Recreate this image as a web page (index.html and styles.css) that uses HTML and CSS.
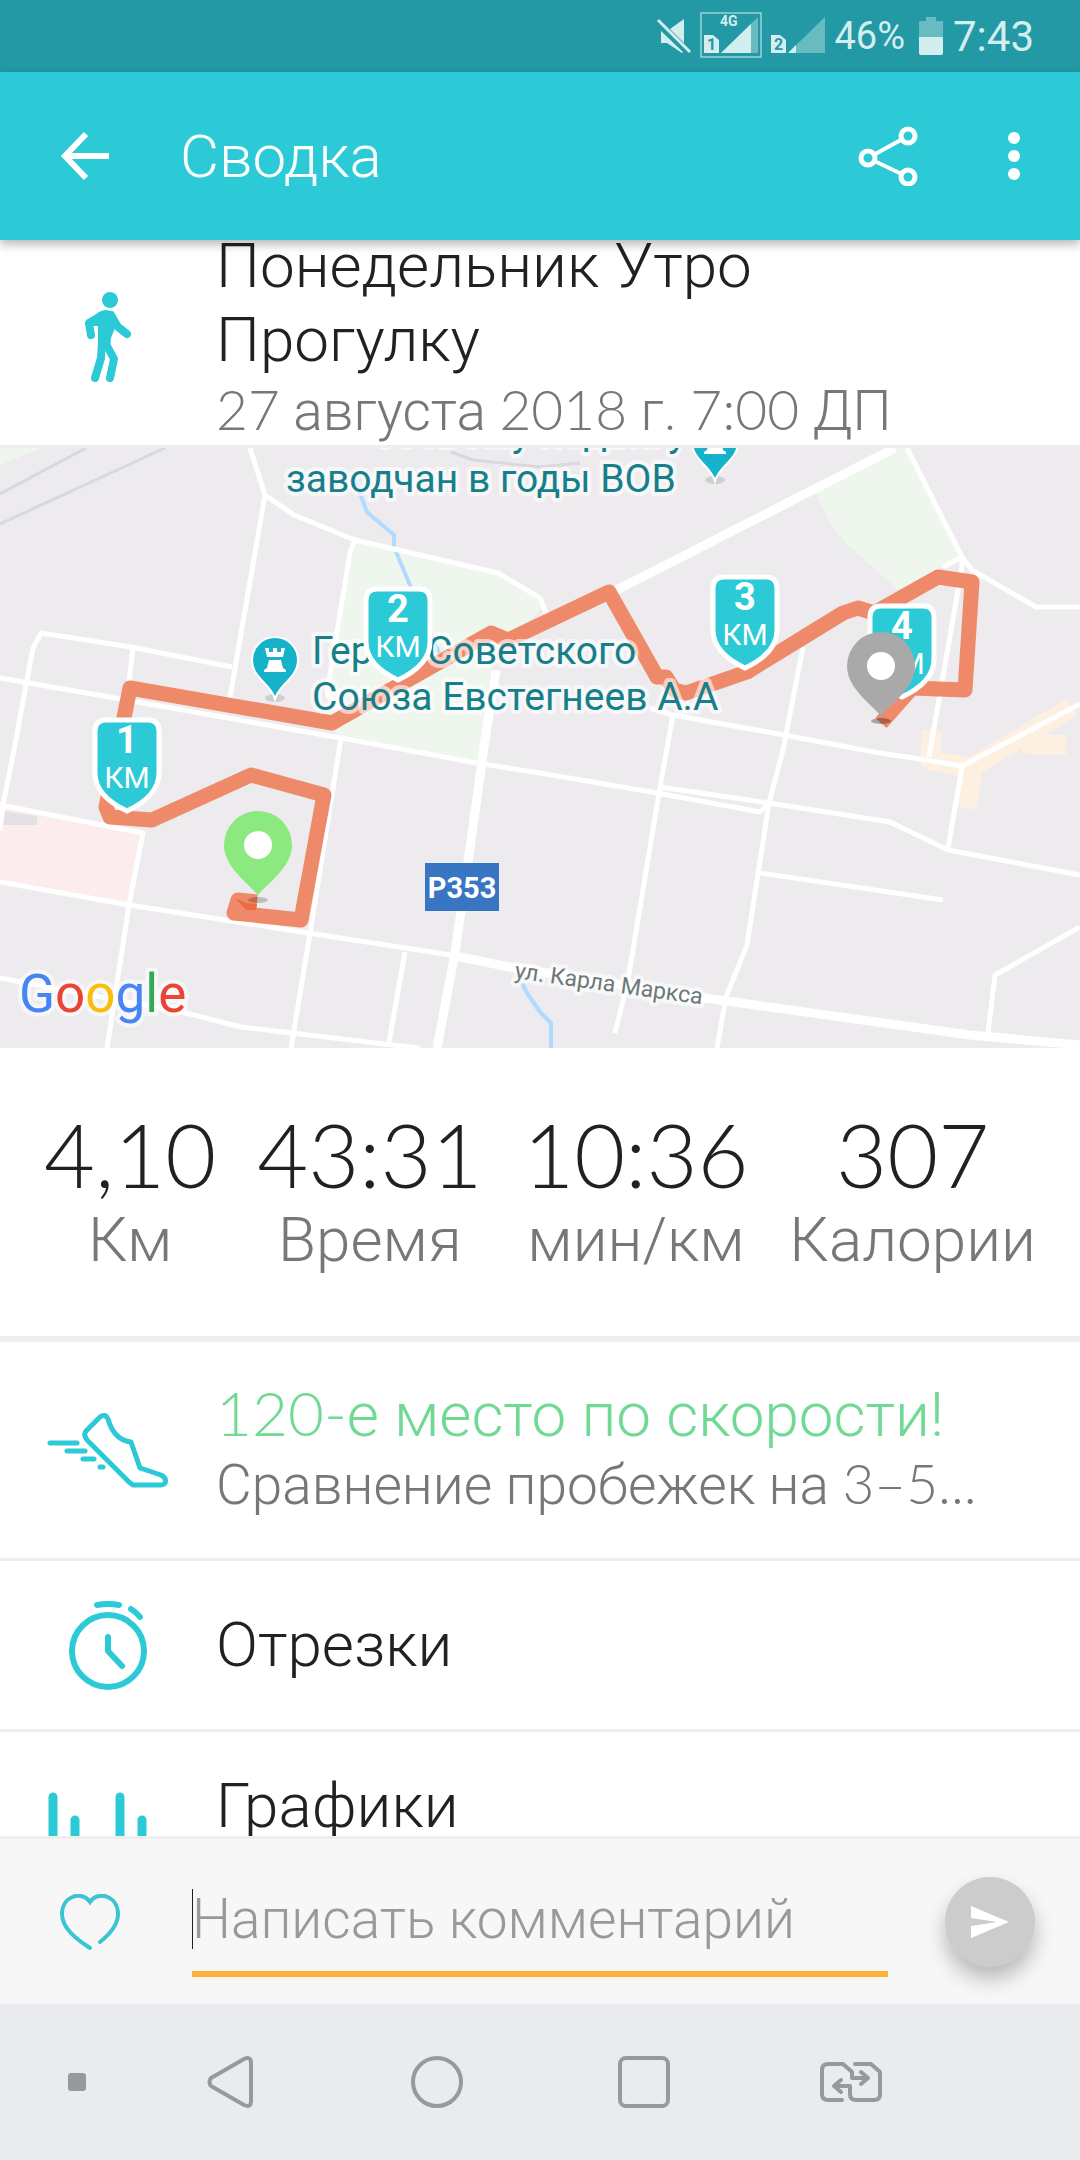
FILE: index.html
```html
<!DOCTYPE html>
<html lang="ru">
  <head>
    <meta charset="UTF-8" />
    <meta name="viewport" content="width=device-width,initial-scale=1.0" />
    <title>Сводка</title>
    <link rel="stylesheet" href="styles.css">
  </head>
  <body>
    <div class="status-bar">
      <svg width="36" height="38" viewBox="0 0 36 38" fill="currentColor">
        <path d="M14 12 L28 2 V26 Z M5 14 L5 26 H11 L26 36 L27 35 Z" />
        <path d="M2 3 L34 35" stroke="currentColor" stroke-width="3" />
      </svg>
      <svg class="sim" width="62" height="46" viewBox="0 0 62 46" fill="currentColor">
        <rect x="1" y="1" width="60" height="44" fill="none" stroke="currentColor" />
        <path d="M21 41 L58 5 V41 Z" opacity=".4" />
        <path d="M21 41 L51 12 V41 Z" />
        <path d="M4 23 H13 L19 28 V41 H4 Z" />
        <text x="20" y="14" class="net">4G</text>
        <text x="7" y="38" class="sim-no">1</text>
      </svg>
      <svg class="sim" width="56" height="46" viewBox="0 0 56 46" fill="currentColor">
        <path d="M18 41 L55 5 V41 Z" opacity=".4" />
        <path d="M18 41 L26 33 V41 Z" />
        <path d="M1 23 H10 L16 28 V41 H1 Z" />
        <text x="4" y="38" class="sim-no">2</text>
      </svg>
      <span class="battery-level">46%</span>
      <svg width="24" height="38" viewBox="0 0 24 38" fill="currentColor">
        <path d="M7 0 H17 V4 H24 V20 H0 V4 H7 Z" opacity=".4" />
        <path d="M0 20 H24 V36 Q24 38 22 38 H2 Q0 38 0 36 Z" />
      </svg>
      <span class="clock">7:43</span>
    </div>

    <header class="app-bar">
      <button class="icon-btn" aria-label="Назад">
        <svg width="50" height="50" viewBox="0 0 50 50" fill="none" stroke="currentColor" stroke-width="6">
          <path d="M26 3 L5 25 L26 47 M5 25 H49" />
        </svg>
      </button>
      <h1>Сводка</h1>
      <button class="icon-btn" aria-label="Поделиться">
        <svg width="60" height="60" viewBox="0 0 60 60" fill="none" stroke="currentColor">
          <path d="M10 32 L50 10 M10 32 L50 51" stroke-width="4" />
          <g class="share-dots" stroke-width="5">
            <circle cx="10" cy="32" r="7" />
            <circle cx="50" cy="10" r="7" />
            <circle cx="50" cy="51" r="7" />
          </g>
        </svg>
      </button>
      <button class="icon-btn" aria-label="Меню">
        <svg width="12" height="48" viewBox="0 0 12 48" fill="currentColor">
          <circle cx="6" cy="6" r="6" />
          <circle cx="6" cy="24" r="6" />
          <circle cx="6" cy="42" r="6" />
        </svg>
      </button>
    </header>

    <main>
      <section class="row activity">
        <div class="row-icon">
          <svg width="46" height="90" viewBox="0 0 46 90" fill="none" stroke="currentColor" stroke-width="8" stroke-linecap="round" stroke-linejoin="round">
            <ellipse cx="25" cy="8" rx="8" ry="8" fill="currentColor" stroke="none" />
            <path d="M14 20 Q21 16 27 20 L32 31 L26 46 L25 56 H13 V34 L8 34 L3 28 Z" fill="currentColor" stroke="none" />
            <path d="M16 24 L4 31 L6 43" />
            <path d="M26 23 L33 35 L42 42" />
            <path d="M17 50 L16 66 L10 86" />
            <path d="M20 50 L29 67 L25 86" />
          </svg>
        </div>
        <div class="row-text">
          <h2>Понедельник Утро Прогулку</h2>
          <p><span class="num">27</span> августа <span class="num">2018</span> г. <span class="num">7:00</span> ДП</p>
        </div>
      </section>

      <svg class="map" viewBox="0 448 1080 600" preserveAspectRatio="xMidYMid slice" role="img" aria-label="Карта маршрута">
        <defs>
          <g id="shield">
            <path d="M-32 13 Q-32 2 -21 2 H21 Q32 2 32 13 V55 Q32 78 0 93 Q-32 78 -32 55 Z" fill="#2ccad7" stroke="#fff" stroke-width="5" />
          </g>
          <g id="pin">
            <path d="M0 50 C-10 38 -34 22 -34 0 A34 34 0 0 1 34 0 C34 22 10 38 0 50 Z" />
            <circle r="14" fill="#fff" />
          </g>
          <g id="poi">
            <ellipse cx="0" cy="38" rx="10" ry="4" fill="#000" opacity=".12" />
            <path d="M0 39 C-4 24 -23 18 -23 0 A23 23 0 0 1 23 0 C23 18 4 24 0 39 Z" fill="#15b2c9" stroke="#fff" stroke-width="2" />
            <path d="M-10 -12 H-6 V-8 H-2 V-12 H2 V-8 H6 V-12 H10 L8 -3 H-8 Z M-6 0 H6 L8 8 L11 10 V12 H-11 V10 L-8 8 Z" fill="#fff" />
          </g>
        </defs>

        <rect y="448" width="1080" height="600" fill="#edebee" />

        <g fill="#eef6ee">
          <path d="M0 448 H41 L0 465 Z" />
          <path d="M355 540 L498 573 L545 605 L492 657 L479 763 L336 737 L327 693 Z" />
          <path d="M895 448 L815 490 Q830 530 850 547 L898 590 L962 557 L907 448 Z" />
        </g>
        <path d="M0 807 L143 833 L129 905 L0 882 Z" fill="#fdecee" />
        <path d="M3 811 L37 816 V825 H3 Z" fill="#e4e1e5" />
        <g class="lines" stroke="#fef0e0" stroke-width="20">
          <path d="M932 731 L930 760 L970 768 L1072 707" />
          <path d="M973 765 L967 808" />
          <path d="M1022 744 L1066 745" />
        </g>
        <g class="lines" stroke="#d8d8dd" stroke-width="3">
          <path d="M86 448 L0 494" />
          <path d="M165 448 L0 524" />
          <path d="M451 452 L473 460 L540 467 L580 463" />
        </g>
        <g class="lines" stroke="#b0daff" stroke-width="4">
          <path d="M355 480 L367 512 L394 535 V547 L410 585 L439 653" />
          <path d="M522 983 L527 993 L540 1012 L551 1023 V1048" />
        </g>

        <!-- streets -->
        <g class="lines" stroke="#fff" stroke-width="5">
          <path d="M250 448 L265 495 L294 515 L355 540 L498 573 L540 598 L549 620" />
          <path d="M265 495 L229 703" />
          <path d="M355 540 L350 553 L327 693 L345 725" />
          <path d="M14 750 L26 685 L33 648 L41 633 L131 647 L232 667 M14 750 L3 805 L0 830" />
          <path d="M133 647 L129 683" />
          <path d="M0 678 L115 698 L341 738 L477 763 L540 773 L657 793 L760 812 L769 803" />
          <path d="M660 787 L769 803 L890 822 L948 850 L1080 875" />
          <path d="M341 738 L310 933 L291 1048" />
          <path d="M0 805 L143 833 L129 905 L107 1048" />
          <path d="M0 882 L129 905 L308 933 L451 955" />
          <path d="M0 978 L186 1013 L241 1027 L393 1045 L420 1048" />
          <path d="M405 952 L389 1042" />
          <path d="M907 448 L962 557 L972 570 L1036 607 H1080" />
          <path d="M943 567 L962 557 V567 L929 757" />
          <path d="M650 708 L673 715 L784 735 L874 752 L926 760 L962 766 L1080 704" />
          <path d="M673 715 L659 793 L628 980 L615 1033" />
          <path d="M803 647 L783 750 L769 803 L747 945 L726 997 L717 1048" />
          <path d="M760 873 L943 900" />
          <path d="M962 767 L948 848" />
          <path d="M1080 927 L995 975 L988 1033" />
        </g>
        <g class="lines" stroke="#fff" stroke-width="9">
          <path d="M895 448 L609 594" />
          <path d="M496 670 L485 740 L468 862 L455 953 L437 1048" />
          <path d="M451 955 L510 967 L705 998 L970 1035 L1080 1045" />
        </g>

        <path class="lines" stroke="#ee8a69" stroke-width="15" d="M257 902 L238 900 L234 913 L301 920 L324 795 L251 775 L152 820 L110 817 L106 807 L130 688 L332 723 L491 633 L508 640 L609 592 L657 677 L666 677 L674 690 L686 693 L747 672 L843 613 L858 608 L874 613 L938 577 L972 582 L965 690 L912 688 L881 723" />
        <path d="M235 898 L246 903 L257 904 L256 910 L246 910 Z" fill="#ee6a40" />

        <use href="#poi" x="275" y="660" />
        <use href="#poi" x="715" y="442" />
        <g class="place">
          <text x="374" y="446">боевому подвигу</text>
          <text x="286" y="492">заводчан в годы ВОВ</text>
          <text x="312" y="664">Герой Советского</text>
          <text x="312" y="710">Союза Евстегнеев А.А</text>
        </g>
        <text class="street" transform="translate(514 978) rotate(8)">ул. Карла Маркса</text>
        <rect x="425" y="863" width="74" height="48" fill="#3876c4" />
        <text class="road-no" x="462" y="898">Р353</text>

        <g class="km">
          <use href="#shield" x="127" y="718" />
          <text class="km-no" x="127" y="753">1</text>
          <text x="127" y="788">КМ</text>
          <use href="#shield" x="398" y="587" />
          <text class="km-no" x="398" y="622">2</text>
          <text x="398" y="657">КМ</text>
          <use href="#shield" x="745" y="575" />
          <text class="km-no" x="745" y="610">3</text>
          <text x="745" y="645">КМ</text>
          <use href="#shield" x="902" y="604" />
          <text class="km-no" x="902" y="639">4</text>
          <text x="902" y="674">КМ</text>
        </g>
        <ellipse cx="258" cy="900" rx="10" ry="3" opacity=".2" />
        <use href="#pin" x="258" y="845" fill="#8ce97f" />
        <ellipse cx="881" cy="721" rx="10" ry="3" opacity=".3" />
        <use href="#pin" x="881" y="666" fill="#a9a9a9" />

        <text class="google" x="19" y="1012"><tspan fill="#4885f4">G</tspan><tspan fill="#e94436">o</tspan><tspan fill="#fabd0a">o</tspan><tspan fill="#4885f4">g</tspan><tspan fill="#37a853">l</tspan><tspan fill="#e94436">e</tspan></text>
      </svg>

      <section class="stats">
        <div class="stat"><strong>4,10</strong><span>Км</span></div>
        <div class="stat"><strong>43:31</strong><span>Время</span></div>
        <div class="stat"><strong>10:36</strong><span>мин/км</span></div>
        <div class="stat"><strong>307</strong><span>Калории</span></div>
      </section>

      <a class="row place-row" href="#rank">
        <span class="row-icon">
          <svg width="122" height="76" viewBox="0 0 122 76" fill="none" stroke="currentColor" stroke-width="5" stroke-linecap="round" stroke-linejoin="round">
            <path d="M39 19 L53 5 Q58 1 61 7 Q67 28 84 30 L93 56 L114 63 Q120 66 118 71 Q117 73 113 73 H86 L82 70 L40 28 Q36 23 39 19 Z" />
            <path d="M3 31 H30 M20 39 H38 M36 47 H47 M53 55 H56" />
          </svg>
        </span>
        <span class="row-text">
          <span class="row-title good"><span class="num">120-</span>е место по скорости!</span>
          <span class="row-sub">Сравнение пробежек на <span class="num">3–5...</span></span>
        </span>
      </a>
      <a class="row" href="#laps">
        <span class="row-icon">
          <svg width="80" height="92" viewBox="0 0 80 92" fill="none" stroke="currentColor" stroke-width="6" stroke-linecap="round" stroke-linejoin="round">
            <circle cx="40" cy="52" r="36" />
            <path d="M40 38 V52 L54 67 M29 6 Q40 4 51 6 M63 10 Q68 13 72 18" />
          </svg>
        </span>
        <span class="row-title">Отрезки</span>
      </a>
      <a class="row charts" href="#charts">
        <span class="row-icon">
          <svg width="120" height="84" viewBox="0 0 120 84" fill="none" stroke="currentColor" stroke-width="9" stroke-linecap="round">
            <path d="M5 5 V79 M27 28 V79 M50 60 V79 M72 5 V79 M94 28 V79 M115 60 V79" />
          </svg>
        </span>
        <span class="row-title">Графики</span>
      </a>
    </main>

    <form class="comment-bar">
      <button type="button" class="icon-btn like" aria-label="Нравится">
        <svg width="60" height="56" viewBox="0 0 60 56" fill="none" stroke="currentColor" stroke-width="4" stroke-linecap="round">
          <path d="M30 54 C16 45 2 34 2 20 C2 2 22 -4 30 8 C38 -4 58 2 58 20 C58 31 50 40 40 48" />
        </svg>
      </button>
      <input type="text" aria-label="Комментарий" placeholder="Написать комментарий" />
      <button type="submit" class="send" aria-label="Отправить">
        <svg width="38" height="34" viewBox="0 0 38 34" fill="currentColor">
          <path d="M0 1 L38 17 L0 33 V21 L26 17 L0 13 Z" />
        </svg>
      </button>
    </form>

    <nav class="nav-bar">
      <button class="icon-btn hide" aria-label="Скрыть панель">
        <svg width="18" height="18" viewBox="0 0 18 18"><rect width="18" height="18" rx="3" fill="currentColor" /></svg>
      </button>
      <button class="icon-btn" aria-label="Назад">
        <svg width="46" height="54" viewBox="0 0 46 54" fill="none" stroke="currentColor" stroke-width="4">
          <path d="M37 4 L4 23 Q1 27 4 31 L37 50 Q44 53 44 46 V8 Q44 1 37 4 Z" />
        </svg>
      </button>
      <button class="icon-btn" aria-label="Домой">
        <svg width="54" height="54" viewBox="0 0 54 54" fill="none" stroke="currentColor" stroke-width="4"><circle cx="27" cy="27" r="24" /></svg>
      </button>
      <button class="icon-btn" aria-label="Недавние">
        <svg width="54" height="54" viewBox="0 0 54 54" fill="none" stroke="currentColor" stroke-width="4"><rect x="3" y="3" width="48" height="48" rx="6" /></svg>
      </button>
      <button class="icon-btn" aria-label="Сменить SIM">
        <svg width="62" height="42" viewBox="0 0 62 42" fill="none" stroke="currentColor" stroke-width="4" stroke-linecap="round" stroke-linejoin="round">
          <path d="M22 39 H8 Q2 39 2 33 V9 Q2 3 8 3 H23 L32 11 V17 H47 M41 11 L48 17 L41 23" />
          <path d="M35 3 H51 L60 11 V33 Q60 39 54 39 H36 Q30 39 30 33 V25 H15 M21 19 L14 25 L21 31" />
        </svg>
      </button>
    </nav>
  </body>
</html>
```

FILE: styles.css
```css
* {
  box-sizing: border-box;
}
body {
  display: flex;
  flex-direction: column;
  height: 100vh;
  margin: 0;
  font-family: Roboto, sans-serif;
  font-weight: 300;
  color: #212121;
  background: #fff;
}
h1,
h2,
p {
  margin: 0;
  font-weight: 300;
}
svg {
  display: block;
  flex: none;
}
.num {
  font-family: Lato, sans-serif;
  font-weight: 300;
  line-height: 1;
}
.icon-btn {
  display: flex;
  align-items: center;
  justify-content: center;
  padding: 0;
  border: none;
  background: none;
  color: inherit;
  cursor: pointer;
}

/* status bar */
.status-bar {
  display: flex;
  flex: none;
  align-items: center;
  justify-content: flex-end;
  gap: 8px;
  height: 72px;
  padding: 0 46px;
  background: #2499a6;
  color: #d3eeee;
  font-weight: 400;
}
.sim {
  margin-bottom: 2px;
}
.net {
  font-size: 14px;
  font-weight: 700;
}
.sim-no {
  font-size: 16px;
  font-weight: 700;
  fill: #2499a6;
}
.battery-level {
  margin-right: 6px;
  font-size: 38px;
}
.clock {
  padding-left: 2px;
  font-size: 42px;
}

/* app bar */
.app-bar {
  position: relative;
  z-index: 1;
  display: flex;
  flex: none;
  align-items: center;
  height: 168px;
  padding: 0 60px;
  background: #2ccad7;
  color: #fff;
  box-shadow: 0 4px 10px rgba(0, 0, 0, 0.3);
}
.app-bar h1 {
  flex: 1;
  padding-left: 70px;
  font-size: 60px;
}
.app-bar .icon-btn:last-child {
  margin-left: 90px;
}
.share-dots {
  fill: #2ccad7;
}

main {
  flex: 1;
  min-height: 0;
  overflow: hidden;
}

/* rows */
.row {
  display: flex;
  align-items: center;
  height: 171px;
  padding-right: 45px;
  border-bottom: 3px solid #eee;
  color: inherit;
  text-decoration: none;
}
.row-icon {
  display: flex;
  flex: none;
  justify-content: center;
  width: 216px;
  color: #2ccad7;
}
.row-text {
  min-width: 0;
}
.row-title,
.row-sub {
  display: block;
  overflow: hidden;
  text-overflow: ellipsis;
  white-space: nowrap;
  line-height: 70px;
}
.row-title {
  font-size: 62px;
}
.row-sub {
  font-size: 55px;
  color: #777;
}
.good {
  color: #70d994;
}
.place-row {
  height: 219px;
}
.charts {
  align-items: flex-start;
  padding-top: 39px;
}
.charts .row-icon {
  padding-top: 21px;
}
.activity {
  height: auto;
  margin-top: -11px;
}
.activity h2 {
  max-width: 700px;
  font-size: 62px;
  line-height: 74px;
}
.activity p {
  font-size: 55px;
  line-height: 68px;
  color: #777;
}

/* map */
.map {
  width: 100%;
  height: 600px;
}
.lines {
  fill: none;
  stroke-linejoin: round;
}
.place {
  font-size: 39px;
  font-weight: 400;
  fill: #167f8a;
}
.place text,
.street,
.google {
  paint-order: stroke;
  stroke: rgba(255, 255, 255, 0.6);
  stroke-width: 8px;
  stroke-linejoin: round;
}
.street {
  font-size: 23px;
  font-weight: 400;
  fill: #6b7877;
}
.road-no {
  font-size: 29px;
  font-weight: 700;
  text-anchor: middle;
  fill: #fff;
}
.km {
  font-size: 30px;
  font-weight: 400;
  text-anchor: middle;
  fill: #fff;
}
.km-no {
  font-size: 38px;
  font-weight: 700;
}
.google {
  font-size: 53px;
  font-weight: 400;
}

/* stats */
.stats {
  display: flex;
  justify-content: space-between;
  height: 294px;
  padding: 54px 44px 0;
  border-bottom: 6px solid #eee;
}
.stat {
  display: flex;
  flex-direction: column;
  gap: 2px;
  align-items: center;
}
.stat strong {
  font-family: Lato, sans-serif;
  font-size: 88px;
  font-weight: 300;
  line-height: 104px;
}
.stat span {
  font-size: 62px;
  line-height: 64px;
  color: #777;
}

/* comment form */
.comment-bar {
  display: flex;
  flex: none;
  align-items: center;
  height: 168px;
  padding: 0 45px 0 60px;
  border-top: 3px solid #eee;
  background: #f7f7f7;
}
.like {
  color: #3bc5d2;
}
.comment-bar input {
  flex: 1;
  min-width: 0;
  height: 110px;
  margin: 0 57px 0 72px;
  padding: 0;
  border: none;
  border-bottom: 6px solid #fbb339;
  border-radius: 0;
  outline: none;
  /* text cursor */
  background: linear-gradient(#212121, #212121) no-repeat left center / 1px 60px;
  font: inherit;
  font-size: 55px;
  color: #212121;
}
.comment-bar input::placeholder {
  color: #999;
  opacity: 1;
}
.send {
  display: flex;
  align-items: center;
  justify-content: center;
  width: 90px;
  height: 90px;
  padding: 0;
  border: none;
  border-radius: 50%;
  background: #ccc;
  color: #fff;
  box-shadow: 0 12px 20px rgba(0, 0, 0, 0.25);
}

/* system navigation */
.nav-bar {
  display: grid;
  flex: none;
  grid-template-columns: 126px repeat(4, 1fr) 126px;
  height: 156px;
  background: #e9ebee;
  color: #98999b;
}
.hide {
  padding-left: 28px;
}
```
